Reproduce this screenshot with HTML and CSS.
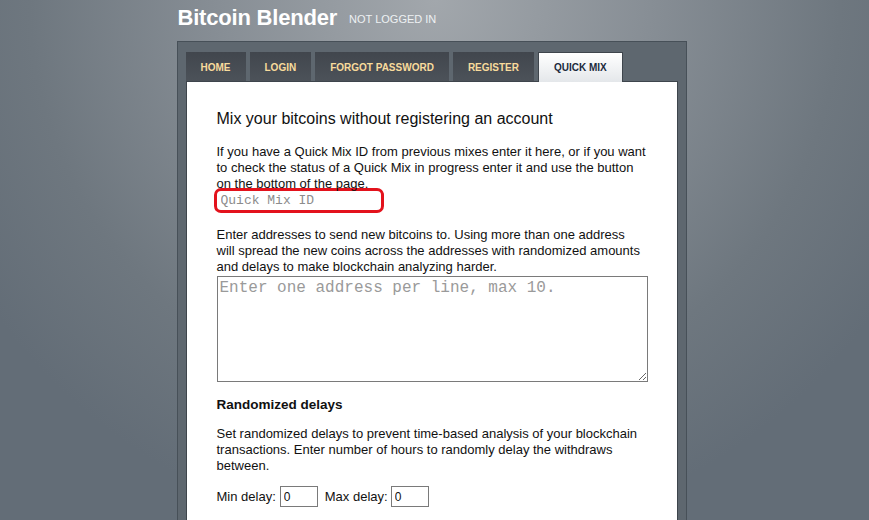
FILE: index.html
```html
<!DOCTYPE html>
<html lang="en">
<head>
<meta charset="utf-8">
<title>Bitcoin Blender - Quick Mix</title>
<link rel="stylesheet" href="styles.css">
</head>
<body>
<div class="page">
  <header class="site-header">
    <h1 class="site-title">Bitcoin Blender</h1>
    <span class="login-state">NOT LOGGED IN</span>
  </header>
  <div class="frame">
    <nav class="tabs">
      <a class="tab" href="#">HOME</a>
      <a class="tab" href="#">LOGIN</a>
      <a class="tab" href="#">FORGOT PASSWORD</a>
      <a class="tab" href="#">REGISTER</a>
      <a class="tab tab-active" href="#">QUICK MIX</a>
    </nav>
    <main class="panel">
      <h2 class="panel-title">Mix your bitcoins without registering an account</h2>
      <p class="text">If you have a Quick Mix ID from previous mixes enter it here, or if you want to check the status of a Quick Mix in progress enter it and use the button on the bottom of the page.</p>
      <input class="mix-id" type="text" placeholder="Quick Mix ID">
      <p class="text text-addr">Enter addresses to send new bitcoins to. Using more than one address will spread the new coins across the addresses with randomized amounts and delays to make blockchain analyzing harder.</p>
      <textarea class="addresses" placeholder="Enter one address per line, max 10."></textarea>
      <h3 class="section-title">Randomized delays</h3>
      <p class="text text-delay">Set randomized delays to prevent time-based analysis of your blockchain transactions. Enter number of hours to randomly delay the withdraws between.</p>
      <div class="delay-row">
        <label class="delay-label">Min delay:</label>
        <input class="delay-input" type="text" value="0">
        <label class="delay-label delay-label-max">Max delay:</label>
        <input class="delay-input" type="text" value="0">
      </div>
      <div class="spacer"></div>
    </main>
  </div>
</div>
</body>
</html>
```
FILE: styles.css
```css
html, body {
  margin: 0;
  padding: 0;
  height: 100%;
  overflow: hidden;
}
body {
  background-color: #636d77;
  background-image: radial-gradient(ellipse 540px 540px at 50% 0, #a2a7ac 0%, #878e95 40%, #6e777f 75%, #636d77 100%);
  font-family: "Liberation Sans", Arial, sans-serif;
  color: #111;
}
.page {
  width: 510px;
  margin-left: calc(50% - 258px);
}
.site-header {
  display: flex;
  align-items: flex-start;
  padding-top: 5px;
  height: 36px;
  box-sizing: border-box;
  margin-bottom: 5px;
}
.site-title {
  margin: 0 0 0 1px;
  font-size: 22px;
  line-height: 26px;
  font-weight: bold;
  color: #fff;
  letter-spacing: -0.2px;
}
.login-state {
  margin-top: 8px;
  margin-left: 12px;
  font-size: 11px;
  line-height: 13px;
  color: #eef1f3;
}
.frame {
  background: #5e676f;
  border: 1px solid #475058;
  padding: 10px 8px 0;
  height: 600px;
}
.tabs {
  display: flex;
  gap: 4px;
  height: 29px;
  align-items: flex-start;
}
.tab {
  display: block;
  height: 29px;
  line-height: 26px;
  padding: 3px 15px 0;
  box-sizing: border-box;
  font-family: "Liberation Sans", Arial, sans-serif;
  font-size: 10px;
  font-weight: bold;
  text-decoration: none;
  color: #f8db9c;
  background: linear-gradient(#41464d, #4c5259);
}
.tab-active {
  position: relative;
  z-index: 1;
  height: 30px;
  line-height: 26px;
  padding: 2px 15px 0;
  color: #1b2a3c;
  background: linear-gradient(#ffffff, #e4e7ea);
  border: 1px solid #3e454c;
  border-bottom: none;
}
.panel {
  background: #fff;
  border: 1px solid #3e454c;
  padding: 28px 29px 0 30px;
  height: 560px;
}
.panel-title {
  margin: 0;
  font-size: 16px;
  line-height: 18px;
  font-weight: normal;
  color: #111;
}
.text {
  margin: 16px 0 0;
  max-width: 429.5px;
  font-size: 13px;
  line-height: 16px;
}
.mix-id {
  display: block;
  margin: -4px 0 0 -3px;
  width: 170px;
  height: 25px;
  box-sizing: border-box;
  border: 3px solid #e3121c;
  border-radius: 7px;
  padding: 0 0 0 4px;
  font-family: "Liberation Mono", "Courier New", monospace;
  font-size: 13px;
  outline: none;
  background: #fff;
}
.mix-id::placeholder {
  color: #8c8c8c;
}
.text-addr {
  margin-top: 14px;
}
.addresses {
  display: block;
  width: 431px;
  height: 106px;
  box-sizing: border-box;
  margin: 1px 0 0;
  border: 1px solid #7a7a7a;
  padding: 2px;
  font-family: "Liberation Mono", "Courier New", monospace;
  font-size: 16px;
  resize: both;
}
.addresses::placeholder {
  color: #9a9a9a;
}
.section-title {
  margin: 15px 0 0;
  font-size: 13.5px;
  line-height: 16px;
  font-weight: bold;
}
.text-delay {
  margin-top: 13px;
}
.delay-row {
  display: flex;
  align-items: center;
  gap: 4px;
  margin-top: 12px;
  height: 21px;
  font-size: 13px;
  line-height: 16px;
}
.delay-label-max {
  margin-left: 3px;
  margin-right: -1px;
}
.delay-input {
  width: 38px;
  height: 21px;
  box-sizing: border-box;
  border: 1px solid #7a7a7a;
  padding: 0 3px;
  font-family: "Liberation Sans", Arial, sans-serif;
  font-size: 12px;
  color: #111;
}
.spacer {
  height: 40px;
}
```
